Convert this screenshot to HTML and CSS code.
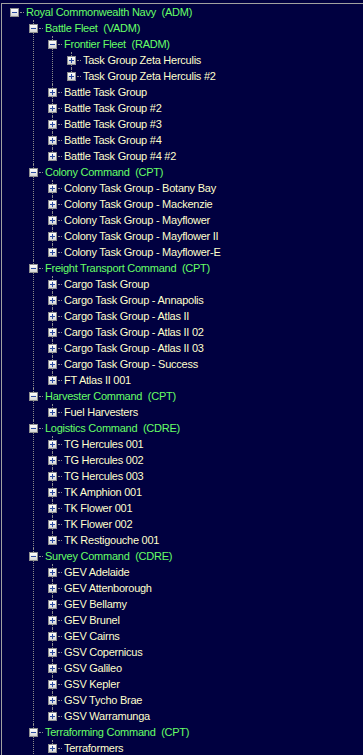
FILE: index.html
```html
<!DOCTYPE html>
<html lang="en">
<head>
  <meta charset="UTF-8">
  <meta name="viewport" content="width=device-width, initial-scale=1.0">
  <title>Fleet Tree</title>
  <link rel="stylesheet" href="styles.css">
</head>
<body>
  <div class="tree">
    <ul>
      <li class="root">
        <div class="node"><span class="btn minus"></span><span class="stem"></span><span class="label group">Royal Commonwealth Navy  (ADM)</span></div>
        <ul>
          <li>
            <div class="node"><span class="btn minus"></span><span class="stem"></span><span class="label group">Battle Fleet  (VADM)</span></div>
            <ul>
              <li>
                <div class="node"><span class="btn minus"></span><span class="stem"></span><span class="label group">Frontier Fleet  (RADM)</span></div>
                <ul>
                  <li><div class="node"><span class="btn plus"></span><span class="stem"></span><span class="label">Task Group Zeta Herculis</span></div></li>
                  <li><div class="node"><span class="btn plus"></span><span class="stem"></span><span class="label">Task Group Zeta Herculis #2</span></div></li>
                </ul>
              </li>
              <li><div class="node"><span class="btn plus"></span><span class="stem"></span><span class="label">Battle Task Group</span></div></li>
              <li><div class="node"><span class="btn plus"></span><span class="stem"></span><span class="label">Battle Task Group #2</span></div></li>
              <li><div class="node"><span class="btn plus"></span><span class="stem"></span><span class="label">Battle Task Group #3</span></div></li>
              <li><div class="node"><span class="btn plus"></span><span class="stem"></span><span class="label">Battle Task Group #4</span></div></li>
              <li><div class="node"><span class="btn plus"></span><span class="stem"></span><span class="label">Battle Task Group #4 #2</span></div></li>
            </ul>
          </li>
          <li>
            <div class="node"><span class="btn minus"></span><span class="stem"></span><span class="label group">Colony Command  (CPT)</span></div>
            <ul>
              <li><div class="node"><span class="btn plus"></span><span class="stem"></span><span class="label">Colony Task Group - Botany Bay</span></div></li>
              <li><div class="node"><span class="btn plus"></span><span class="stem"></span><span class="label">Colony Task Group - Mackenzie</span></div></li>
              <li><div class="node"><span class="btn plus"></span><span class="stem"></span><span class="label">Colony Task Group - Mayflower</span></div></li>
              <li><div class="node"><span class="btn plus"></span><span class="stem"></span><span class="label">Colony Task Group - Mayflower II</span></div></li>
              <li><div class="node"><span class="btn plus"></span><span class="stem"></span><span class="label">Colony Task Group - Mayflower-E</span></div></li>
            </ul>
          </li>
          <li>
            <div class="node"><span class="btn minus"></span><span class="stem"></span><span class="label group">Freight Transport Command  (CPT)</span></div>
            <ul>
              <li><div class="node"><span class="btn plus"></span><span class="stem"></span><span class="label">Cargo Task Group</span></div></li>
              <li><div class="node"><span class="btn plus"></span><span class="stem"></span><span class="label">Cargo Task Group - Annapolis</span></div></li>
              <li><div class="node"><span class="btn plus"></span><span class="stem"></span><span class="label">Cargo Task Group - Atlas II</span></div></li>
              <li><div class="node"><span class="btn plus"></span><span class="stem"></span><span class="label">Cargo Task Group - Atlas II 02</span></div></li>
              <li><div class="node"><span class="btn plus"></span><span class="stem"></span><span class="label">Cargo Task Group - Atlas II 03</span></div></li>
              <li><div class="node"><span class="btn plus"></span><span class="stem"></span><span class="label">Cargo Task Group - Success</span></div></li>
              <li><div class="node"><span class="btn plus"></span><span class="stem"></span><span class="label">FT Atlas II 001</span></div></li>
            </ul>
          </li>
          <li>
            <div class="node"><span class="btn minus"></span><span class="stem"></span><span class="label group">Harvester Command  (CPT)</span></div>
            <ul>
              <li><div class="node"><span class="btn plus"></span><span class="stem"></span><span class="label">Fuel Harvesters</span></div></li>
            </ul>
          </li>
          <li>
            <div class="node"><span class="btn minus"></span><span class="stem"></span><span class="label group">Logistics Command  (CDRE)</span></div>
            <ul>
              <li><div class="node"><span class="btn plus"></span><span class="stem"></span><span class="label">TG Hercules 001</span></div></li>
              <li><div class="node"><span class="btn plus"></span><span class="stem"></span><span class="label">TG Hercules 002</span></div></li>
              <li><div class="node"><span class="btn plus"></span><span class="stem"></span><span class="label">TG Hercules 003</span></div></li>
              <li><div class="node"><span class="btn plus"></span><span class="stem"></span><span class="label">TK Amphion 001</span></div></li>
              <li><div class="node"><span class="btn plus"></span><span class="stem"></span><span class="label">TK Flower 001</span></div></li>
              <li><div class="node"><span class="btn plus"></span><span class="stem"></span><span class="label">TK Flower 002</span></div></li>
              <li><div class="node"><span class="btn plus"></span><span class="stem"></span><span class="label">TK Restigouche 001</span></div></li>
            </ul>
          </li>
          <li>
            <div class="node"><span class="btn minus"></span><span class="stem"></span><span class="label group">Survey Command  (CDRE)</span></div>
            <ul>
              <li><div class="node"><span class="btn plus"></span><span class="stem"></span><span class="label">GEV Adelaide</span></div></li>
              <li><div class="node"><span class="btn plus"></span><span class="stem"></span><span class="label">GEV Attenborough</span></div></li>
              <li><div class="node"><span class="btn plus"></span><span class="stem"></span><span class="label">GEV Bellamy</span></div></li>
              <li><div class="node"><span class="btn plus"></span><span class="stem"></span><span class="label">GEV Brunel</span></div></li>
              <li><div class="node"><span class="btn plus"></span><span class="stem"></span><span class="label">GEV Cairns</span></div></li>
              <li><div class="node"><span class="btn plus"></span><span class="stem"></span><span class="label">GSV Copernicus</span></div></li>
              <li><div class="node"><span class="btn plus"></span><span class="stem"></span><span class="label">GSV Galileo</span></div></li>
              <li><div class="node"><span class="btn plus"></span><span class="stem"></span><span class="label">GSV Kepler</span></div></li>
              <li><div class="node"><span class="btn plus"></span><span class="stem"></span><span class="label">GSV Tycho Brae</span></div></li>
              <li><div class="node"><span class="btn plus"></span><span class="stem"></span><span class="label">GSV Warramunga</span></div></li>
            </ul>
          </li>
          <!-- the list goes on below the visible area, so the line keeps going -->
          <li class="more">
            <div class="node"><span class="btn minus"></span><span class="stem"></span><span class="label group">Terraforming Command  (CPT)</span></div>
            <ul>
              <li><div class="node"><span class="btn plus"></span><span class="stem"></span><span class="label">Terraformers</span></div></li>
            </ul>
          </li>
        </ul>
      </li>
    </ul>
  </div>
</body>
</html>
```

FILE: styles.css
```css
/* general */
html, body {
  margin: 0;
  padding: 0;
  background: #000040;
}
body {
  font-family: "Liberation Sans", Arial, sans-serif;
  font-size: 11px;
  overflow: hidden;
}
.tree {
  margin: 3px 0 0 1px;
  border-top: 1px solid #a0a0a0;
  border-left: 1px solid #a0a0a0;
  min-height: 760px;
}
/* lists */
.tree ul {
  list-style: none;
  margin: 0;
  padding: 0;
}
.tree ul ul {
  padding-left: 19px;
}
.tree li {
  position: relative;
}
/* vertical line joining siblings */
.tree li::before {
  content: "";
  position: absolute;
  left: 12px;
  top: 0;
  bottom: 0;
  border-left: 1px dotted #8a8a8a;
}
.tree li:last-child::before {
  bottom: auto;
  height: 8px;
}
.tree li.more::before {
  bottom: 0;
  height: auto;
}
.tree li.root::before {
  display: none;
}
/* one row */
.node {
  display: flex;
  align-items: center;
  height: 16px;
  padding-left: 8px;
}
.btn {
  position: relative;
  flex: none;
  box-sizing: border-box;
  width: 9px;
  height: 9px;
  border: 1px solid #8e8f8f;
  background: linear-gradient(#ffffff, #d6d6d6);
}
.btn::before {
  content: "";
  position: absolute;
  left: 1px;
  top: 3px;
  width: 5px;
  height: 1px;
  background: #2a4aa0;
}
.btn.plus::after {
  content: "";
  position: absolute;
  left: 3px;
  top: 1px;
  width: 1px;
  height: 5px;
  background: #2a4aa0;
}
.stem {
  flex: none;
  width: 4px;
  margin: 0 2px 0 1px;
  border-top: 1px dotted #8a8a8a;
}
.label {
  white-space: pre;
  color: #ffffcc;
  line-height: 16px;
  letter-spacing: -0.25px;
}
.label.group {
  color: #66ff66;
}
```
